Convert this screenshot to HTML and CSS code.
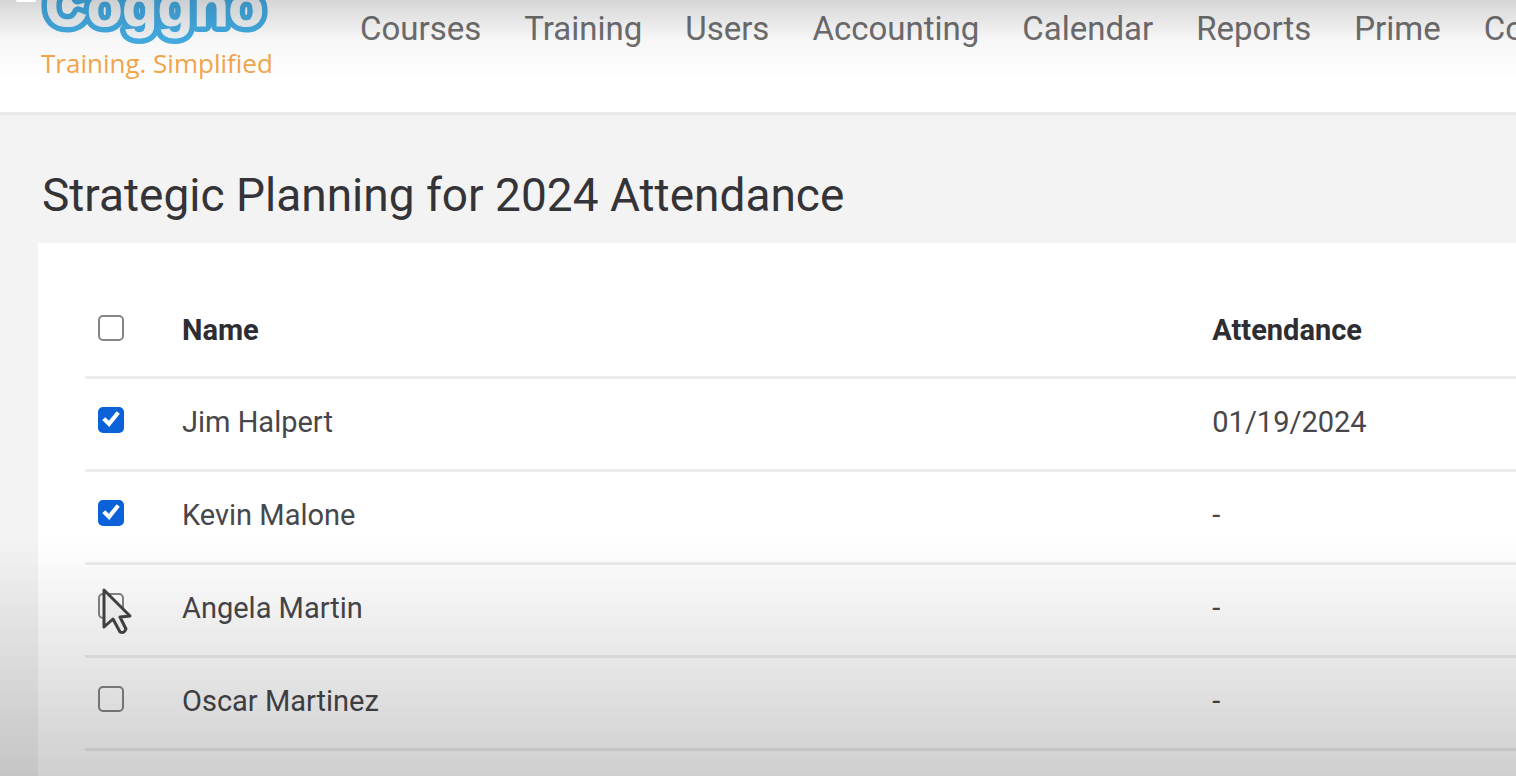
FILE: index.html
```html
<!DOCTYPE html>
<html lang="en">
<head>
    <meta charset="UTF-8">
    <meta name="viewport" content="width=device-width, initial-scale=1.0">
    <title>Strategic Planning for 2024 Attendance</title>
    <link rel="stylesheet" href="styles.css">
</head>
<body>
    <header class="site-header">
        <a href="#" class="logo">
            <svg width="244" height="84" viewBox="0 0 244 84" role="img" aria-label="Coggno Training. Simplified">
                <text class="logo-name logo-outline" x="9" y="26">Coggno</text>
                <text class="logo-name" x="9" y="26">Coggno</text>
                <text class="logo-tagline" x="5" y="73">Training. Simplified</text>
            </svg>
        </a>
        <nav class="main-nav">
            <a href="#">Courses</a>
            <a href="#">Training</a>
            <a href="#">Users</a>
            <a href="#">Accounting</a>
            <a href="#">Calendar</a>
            <a href="#">Reports</a>
            <a href="#">Prime</a>
            <a href="#">Co</a>
        </nav>
    </header>

    <main>
        <h1>Strategic Planning for 2024 Attendance</h1>

        <div class="card">
            <table>
                <thead>
                    <tr>
                        <th class="select"><input type="checkbox" aria-label="Select all"></th>
                        <th class="name">Name</th>
                        <th>Attendance</th>
                    </tr>
                </thead>
                <tbody>
                    <tr>
                        <td class="select"><input type="checkbox" id="jim" checked></td>
                        <td><label for="jim">Jim Halpert</label></td>
                        <td>01/19/2024</td>
                    </tr>
                    <tr>
                        <td class="select"><input type="checkbox" id="kevin" checked></td>
                        <td><label for="kevin">Kevin Malone</label></td>
                        <td>-</td>
                    </tr>
                    <tr>
                        <td class="select">
                            <input type="checkbox" id="angela">
                            <svg class="cursor" width="34" height="50" viewBox="0 0 34 50" aria-hidden="true">
                                <path d="M4 3 V40 L13 32 L20 45 Q24 47 26 42 L20 30 L30 29 Z"/>
                            </svg>
                        </td>
                        <td><label for="angela">Angela Martin</label></td>
                        <td>-</td>
                    </tr>
                    <tr>
                        <td class="select"><input type="checkbox" id="oscar"></td>
                        <td><label for="oscar">Oscar Martinez</label></td>
                        <td>-</td>
                    </tr>
                </tbody>
            </table>
        </div>
    </main>

    <div class="shade shade-top"></div>
    <div class="shade shade-bottom"></div>
    <div class="corner"></div>
</body>
</html>
```

FILE: styles.css
```css
* {
    box-sizing: border-box;
}
body {
    display: flex;
    flex-direction: column;
    margin: 0;
    min-height: 100vh;
    background-color: #f3f3f3;
    color: #47474b;
    font-family: Roboto, Arial, sans-serif;
    font-size: 29px;
    overflow-x: hidden;
}

/* Header */
.site-header {
    display: flex;
    align-items: flex-start;
    height: 115px;
    padding-left: 36px;
    background-color: #fff;
    border-bottom: 3px solid #e9e9e9;
    overflow: hidden;
}
.logo {
    flex: none;
    width: 324px;
}
.logo svg {
    display: block;
}
.logo-name {
    font-family: "Liberation Sans", Arial, sans-serif;
    font-size: 58px;
    font-weight: 700;
    fill: #f4f7f9;
    stroke: #f4f7f9;
    stroke-width: 1;
}
.logo-outline {
    stroke: #45aee6;
    stroke-width: 12;
    stroke-linejoin: round;
}
.logo-tagline {
    font-family: "Open Sans", sans-serif;
    font-size: 26px;
    fill: #f3a64c;
}
.main-nav {
    display: flex;
    gap: 43px;
    padding-top: 9px;
    white-space: nowrap;
}
.main-nav a {
    color: #707072;
    font-size: 33px;
    line-height: 40px;
    text-decoration: none;
}

/* Attendance list */
main {
    display: flex;
    flex: 1;
    flex-direction: column;
    padding: 48px 0 0 38px;
}
h1 {
    margin: 0;
    padding-left: 4px;
    color: #343438;
    font-size: 46px;
    font-weight: 400;
    line-height: 64px;
}
.card {
    flex: 1;
    margin-top: 16px;
    padding: 41px 0 0 47px;
    background-color: #fff;
}
table {
    width: 100%;
    table-layout: fixed;
    border-collapse: collapse;
}
th, td {
    height: 93px;
    padding: 0;
    border-bottom: 3px solid #ededee;
    text-align: left;
}
th {
    color: #2e2e32;
    font-weight: 700;
}
td {
    padding-bottom: 4px;
}
.select {
    position: relative;
    width: 97px;
    padding-left: 13px;
}
.name {
    width: 72%;
}
input[type="checkbox"] {
    display: block;
    appearance: none;
    width: 26px;
    height: 26px;
    margin: 0 0 4px;
    border: 2px solid #858585;
    border-radius: 5px;
    background-color: transparent;
}
input[type="checkbox"]:checked {
    border-color: #0b61d8;
    background-color: #0b61d8;
}
input[type="checkbox"]:checked::after {
    content: "";
    display: block;
    height: 22px;
    background-color: #fff;
    clip-path: polygon(10% 52%, 24% 40%, 40% 56%, 76% 12%, 90% 24%, 42% 84%);
}
.cursor {
    position: absolute;
    top: 22px;
    left: 15px;
    fill: #f8f8f8;
    stroke: #444;
    stroke-width: 3;
    stroke-linejoin: round;
}

/* Shading along the top and bottom of the window */
.shade {
    position: fixed;
    left: 0;
    right: 0;
    pointer-events: none;
}
.shade-top {
    top: 0;
    height: 80px;
    background: linear-gradient(rgba(0, 0, 0, 0.16), rgba(0, 0, 0, 0.03) 50%, transparent);
}
.shade-bottom {
    bottom: 0;
    height: 236px;
    background: linear-gradient(transparent, rgba(0, 0, 0, 0.19));
}
.corner {
    position: fixed;
    top: 0;
    left: 16px;
    width: 20px;
    height: 2px;
    border-radius: 0 0 10px 10px;
    background-color: #fff;
}
```
